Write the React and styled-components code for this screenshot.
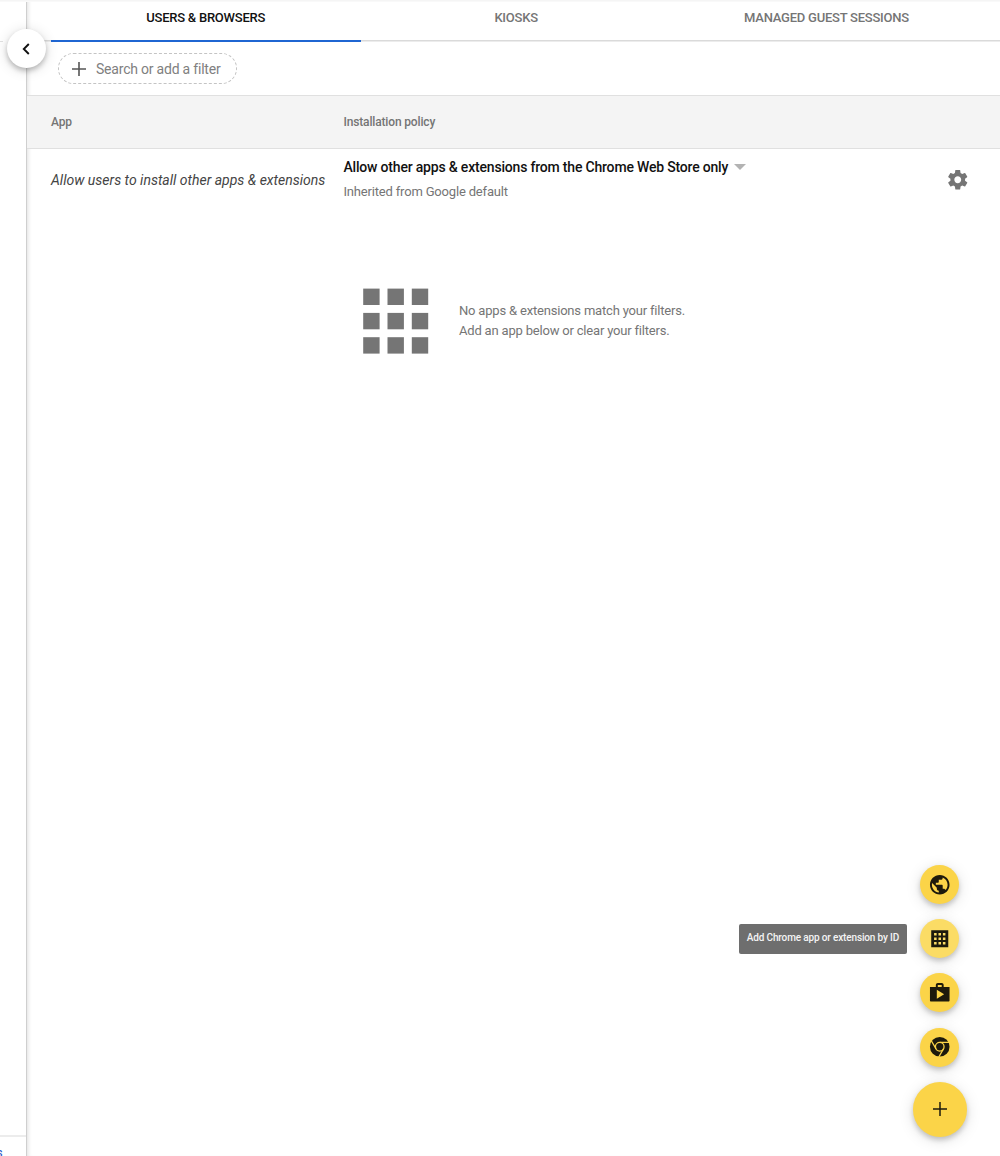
import React from 'react';
import styled, { createGlobalStyle } from 'styled-components';

const Global = createGlobalStyle`
  * { box-sizing: border-box; }
  body { margin: 0; background: #fff; font-family: Roboto, "Liberation Sans", sans-serif; }
  button { font-family: inherit; border: 0; padding: 0; background: none; cursor: pointer; }
  svg { flex-shrink: 0; }
`;

const Page = styled.div`
  position: relative;
  display: flex;
  height: 1156px;
  overflow: hidden;
  &::before {
    content: '';
    position: absolute;
    inset: 0 0 auto;
    height: 2px;
    background: linear-gradient(#f3f3f3, #fbfbfb);
  }
`;

const Sidebar = styled.aside`
  flex: 0 0 27px;
  display: flex;
  flex-direction: column;
  justify-content: space-between;
  border-right: 1px solid #cfcfcf;
  overflow: hidden;
`;

const SidebarTop = styled.div`
  width: 3px;
  height: 42px;
  border-bottom: 1px solid #e2e2e2;
`;

const SidebarFooter = styled.a`
  height: 21px;
  border-top: 2px solid #ececec;
  color: #2a56c6;
  font-size: 13px;
  line-height: 32px;
  text-indent: -4px;
`;

const Collapse = styled.button`
  position: absolute;
  left: 7px;
  top: 29px;
  width: 39px;
  height: 39px;
  display: grid;
  place-items: center;
  padding-right: 2px;
  border-radius: 50%;
  background: #fff;
  box-shadow: 0 3px 5px rgba(0, 0, 0, 0.22), 0 2px 14px rgba(0, 0, 0, 0.14);
`;

const Main = styled.main`
  flex: 1;
  min-width: 0;
  box-shadow: inset 4px 0 4px -3px rgba(0, 0, 0, 0.13);
`;

const Tabs = styled.nav`
  display: flex;
  height: 42px;
  padding-left: 23.5px;
  background: linear-gradient(#dadada, #dadada) 0 40px / 100% 1px no-repeat,
    linear-gradient(#ececec, #ececec) 0 41px / 100% 1px no-repeat;
`;

const Tab = styled.button`
  flex: 0 0 310.4px;
  height: 42px;
  padding-bottom: 5px;
  border-bottom: 2px solid ${(p) => (p.$active ? '#1f66d2' : 'transparent')};
  color: ${(p) => (p.$active ? '#111' : '#757575')};
  font-size: 13px;
  font-weight: 500;
  letter-spacing: -0.24px;
`;

const FilterBar = styled.div`
  height: 53px;
  padding: 11px 31px;
`;

const FilterChip = styled.button`
  display: flex;
  align-items: center;
  width: 179px;
  height: 31px;
  padding-left: 12.5px;
  gap: 10.5px;
  border: 1px dashed #c4c4c4;
  border-radius: 16px;
  color: #808080;
  font-size: 14px;
  letter-spacing: -0.21px;
  white-space: nowrap;
`;

const columns = `
  display: grid;
  grid-template-columns: 292.5px 1fr auto;
  padding: 0 32px 0 24px;
`;

const TableHead = styled.div`
  ${columns}
  height: 54px;
  align-items: center;
  padding-bottom: 1px;
  border-top: 1px solid #e0e0e0;
  border-bottom: 1px solid #e0e0e0;
  background: #f4f4f4;
  color: #757575;
  font-size: 12px;
  font-weight: 500;
  letter-spacing: -0.16px;
`;

const PolicyRow = styled.div`
  ${columns}
  height: 62px;
  align-items: center;
`;

const RowTitle = styled.em`
  color: #444;
  font-size: 14px;
  white-space: nowrap;
`;

const Policy = styled.div`
  display: flex;
  flex-direction: column;
  gap: 6px;
  padding-bottom: 2px;
`;

const PolicySelect = styled.button`
  display: flex;
  align-items: center;
  gap: 6px;
  height: 20px;
  color: #111;
  font-size: 14px;
  font-weight: 500;
  letter-spacing: -0.19px;
  white-space: nowrap;
`;

const Caret = styled.span`
  border: 6px solid transparent;
  border-top-color: #b3b3b3;
  border-bottom: 0;
`;

const Inherited = styled.span`
  height: 18px;
  color: #757575;
  font-size: 13px;
  letter-spacing: -0.18px;
  line-height: 18px;
`;

const Settings = styled.button`
  display: flex;
  width: 20px;
  justify-content: center;
  color: #757575;
`;

const Empty = styled.section`
  display: flex;
  align-items: center;
  gap: 30px;
  padding: 77px 0 0 336px;
`;

const EmptyText = styled.p`
  margin: 0;
  padding-bottom: 1px;
  color: #757575;
  font-size: 13px;
  letter-spacing: -0.19px;
  line-height: 19.5px;
  white-space: nowrap;
`;

const SpeedDial = styled.div`
  position: absolute;
  right: 32.8px;
  bottom: 19.5px;
  display: flex;
  flex-direction: column;
  align-items: center;
  gap: 15.3px;
`;

const Fab = styled.button`
  position: relative;
  display: grid;
  place-items: center;
  width: ${(p) => p.$size || 39}px;
  height: ${(p) => p.$size || 39}px;
  border-radius: 50%;
  background: ${(p) => (p.$hover ? '#fbdc65' : '#fbd448')};
  color: #1d1a0c;
  box-shadow: 0 3px 5px rgba(0, 0, 0, 0.18), 0 3px 15px rgba(0, 0, 0, 0.13);
`;

const Tooltip = styled.span`
  position: absolute;
  right: 52.5px;
  top: 5px;
  width: 168px;
  height: 30px;
  border-radius: 2px;
  background: #6e6e6e;
  color: #f4f4f4;
  font-size: 10px;
  font-weight: 500;
  letter-spacing: -0.15px;
  line-height: 28px;
  text-align: center;
  white-space: nowrap;
`;

const Icon = ({ d, size = 23.5 }) => (
  <svg width={size} height={size} viewBox="0 0 24 24" fill="currentColor" fillRule="evenodd">
    <path d={d} />
  </svg>
);

const GEAR =
  'M19.43 12.98c.04-.32.07-.64.07-.98s-.03-.66-.07-.98l2.11-1.65c.19-.15.24-.42.12-.64l-2-3.46c-.12-.22-.39-.3-.61-.22l-2.49 1c-.52-.4-1.08-.73-1.69-.98l-.38-2.65C14.46 2.18 14.25 2 14 2h-4c-.25 0-.46.18-.49.42l-.38 2.65c-.61.25-1.17.59-1.69.98l-2.49-1c-.23-.09-.49 0-.61.22l-2 3.46c-.13.22-.07.49.12.64l2.11 1.65c-.04.32-.07.65-.07.98s.03.66.07.98l-2.11 1.65c-.19.15-.24.42-.12.64l2 3.46c.12.22.39.3.61.22l2.49-1c.52.4 1.08.73 1.69.98l.38 2.65c.03.24.24.42.49.42h4c.25 0 .46-.18.49-.42l.38-2.65c.61-.25 1.17-.59 1.69-.98l2.49 1c.23.09.49 0 .61-.22l2-3.46c.12-.22.07-.49-.12-.64l-2.11-1.65zM12 15.5c-1.93 0-3.5-1.57-3.5-3.5s1.57-3.5 3.5-3.5 3.5 1.57 3.5 3.5-1.57 3.5-3.5 3.5z';
const GLOBE =
  'M12 2C6.48 2 2 6.48 2 12s4.48 10 10 10 10-4.48 10-10S17.52 2 12 2zm-1 17.93c-3.95-.49-7-3.85-7-7.93 0-.62.08-1.21.21-1.79L9 15v1c0 1.1.9 2 2 2v1.93zm6.9-2.54c-.26-.81-1-1.39-1.9-1.39h-1v-3c0-.55-.45-1-1-1H8v-2h2c.55 0 1-.45 1-1V7h2c1.1 0 2-.9 2-2v-.41c2.93 1.19 5 4.06 5 7.41 0 2.08-.8 3.97-2.1 5.39z';
const SHOP =
  'M16 6V4c0-1.11-.89-2-2-2h-4c-1.11 0-2 .89-2 2v2H2v14.2c0 .5.3.8.8.8h18.4c.5 0 .8-.3.8-.8V6h-6zm-6-2h4v2h-4V4zM9 18V9l7.5 4.5L9 18z';
const GRID =
  'M3.3 3.3h17.4v17.4H3.3zM6.2 6.2v2.6h2.6V6.2zm4.5 0v2.6h2.6V6.2zm4.5 0v2.6h2.6V6.2zM6.2 10.7v2.6h2.6v-2.6zm4.5 0v2.6h2.6v-2.6zm4.5 0v2.6h2.6v-2.6zM6.2 15.2v2.6h2.6v-2.6zm4.5 0v2.6h2.6v-2.6zm4.5 0v2.6h2.6v-2.6z';

const ChromeIcon = () => (
  <svg width="23.5" height="23.5" viewBox="0 0 24 24" fill="none">
    <circle cx="12" cy="12" r="10" fill="#1d1a0c" />
    <g stroke="#fbd448" strokeWidth="1.3">
      <circle cx="12" cy="12" r="4.4" />
      <path d="M12 7.6h9.6M8.2 14.2 3.4 5.9M15.8 14.2 11 22.5" />
    </g>
  </svg>
);

const AppsGlyph = () => (
  <svg width="66" height="66" viewBox="0 0 66 66" fill="#757575">
    {[0, 24.3, 48.6].map((y) =>
      [0, 24.3, 48.6].map((x) => <rect key={`${x}-${y}`} x={x + 0.2} y={y + 0.6} width="16.4" height="16.4" />)
    )}
  </svg>
);

const Plus = ({ size, color, width }) => (
  <svg width={size} height={size} viewBox={`0 0 ${size} ${size}`} stroke={color} strokeWidth={width}>
    <path d={`M${size / 2} 0V${size}M0 ${size / 2}H${size}`} />
  </svg>
);

export default function App() {
  return (
    <Page>
      <Global />
      <Sidebar>
        <SidebarTop />
        <SidebarFooter>s</SidebarFooter>
      </Sidebar>
      <Main>
        <Tabs>
          <Tab $active>USERS &amp; BROWSERS</Tab>
          <Tab>KIOSKS</Tab>
          <Tab>MANAGED GUEST SESSIONS</Tab>
        </Tabs>
        <FilterBar>
          <FilterChip>
            <Plus size={14} color="#555" width={1.6} />
            Search or add a filter
          </FilterChip>
        </FilterBar>
        <TableHead>
          <span>App</span>
          <span>Installation policy</span>
        </TableHead>
        <PolicyRow>
          <RowTitle>Allow users to install other apps &amp; extensions</RowTitle>
          <Policy>
            <PolicySelect>
              Allow other apps &amp; extensions from the Chrome Web Store only
              <Caret />
            </PolicySelect>
            <Inherited>Inherited from Google default</Inherited>
          </Policy>
          <Settings aria-label="Settings">
            <Icon d={GEAR} />
          </Settings>
        </PolicyRow>
        <Empty>
          <AppsGlyph />
          <EmptyText>
            No apps &amp; extensions match your filters.
            <br />
            Add an app below or clear your filters.
          </EmptyText>
        </Empty>
      </Main>
      <Collapse aria-label="Collapse">
        <svg width="8" height="12" viewBox="0 0 8 12" fill="none" stroke="#111" strokeWidth="1.9">
          <path d="M6.8 1 1.8 6l5 5" />
        </svg>
      </Collapse>
      <SpeedDial>
        <Fab><Icon d={GLOBE} /></Fab>
        <Fab $hover>
          <Icon d={GRID} />
          <Tooltip>Add Chrome app or extension by ID</Tooltip>
        </Fab>
        <Fab><Icon d={SHOP} /></Fab>
        <Fab><ChromeIcon /></Fab>
        <Fab $size={54.5}><Plus size={14} color="#1d1a0c" width={1.5} /></Fab>
      </SpeedDial>
    </Page>
  );
}
